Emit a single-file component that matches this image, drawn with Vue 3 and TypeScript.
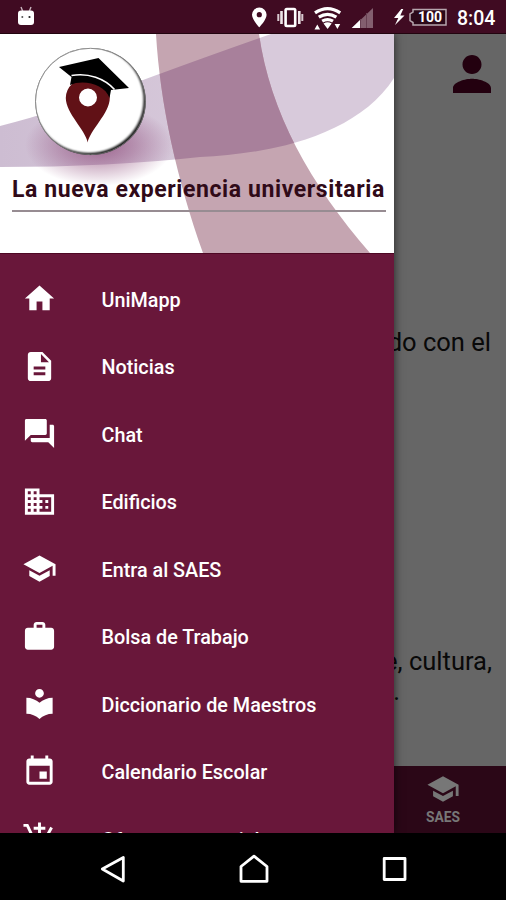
<script setup lang="ts">
interface MenuItem {
  label: string
  icon: string
}

const menu: MenuItem[] = [
  { label: 'UniMapp', icon: 'M10 20v-6h4v6h5v-8h3L12 3 2 12h3v8z' },
  { label: 'Noticias', icon: 'M14 2H6c-1.1 0-1.99.9-1.99 2L4 20c0 1.1.89 2 1.99 2H18c1.1 0 2-.9 2-2V8l-6-6zm2 16H8v-2h8v2zm0-4H8v-2h8v2zm-3-5V3.5L18.5 9H13z' },
  { label: 'Chat', icon: 'M21 6h-2v9H6v2c0 .55.45 1 1 1h11l4 4V7c0-.55-.45-1-1-1zm-4 6V3c0-.55-.45-1-1-1H3c-.55 0-1 .45-1 1v14l4-4h10c.55 0 1-.45 1-1z' },
  { label: 'Edificios', icon: 'M12 7V3H2v18h20V7H12zM6 19H4v-2h2v2zm0-4H4v-2h2v2zm0-4H4V9h2v2zm0-4H4V5h2v2zm4 12H8v-2h2v2zm0-4H8v-2h2v2zm0-4H8V9h2v2zm0-4H8V5h2v2zm10 12h-8v-2h2v-2h-2v-2h2v-2h-2V9h8v10zm-2-8h-2v2h2v-2zm0 4h-2v2h2v-2z' },
  { label: 'Entra al SAES', icon: 'M5 13.18v4L12 21l7-3.82v-4L12 17l-7-3.82zM12 3L1 9l11 6 9-4.91V17h2V9L12 3z' },
  { label: 'Bolsa de Trabajo', icon: 'M20 6h-4V4c0-1.11-.89-2-2-2h-4c-1.11 0-2 .89-2 2v2H4c-1.11 0-1.99.89-1.99 2L2 19c0 1.11.89 2 2 2h16c1.11 0 2-.89 2-2V8c0-1.11-.89-2-2-2zm-6 0h-4V4h4v2z' },
  { label: 'Diccionario de Maestros', icon: 'M12 11.55C9.64 9.35 6.48 8 3 8v11c3.48 0 6.64 1.35 9 3.55 2.36-2.19 5.52-3.55 9-3.55V8c-3.48 0-6.64 1.35-9 3.55zM12 8c1.66 0 3-1.34 3-3s-1.34-3-3-3-3 1.34-3 3 1.34 3 3 3z' },
  { label: 'Calendario Escolar', icon: 'M17 12h-5v5h5v-5zM16 1v2H8V1H6v2H5c-1.11 0-1.99.9-1.99 2L3 19c0 1.1.89 2 2 2h14c1.1 0 2-.9 2-2V5c0-1.1-.9-2-2-2h-1V1h-2zm3 18H5V8h14v11z' },
  { label: 'Ofertas comerciales', icon: 'M11 9h2V6h3V4h-3V1h-2v3H8v2h3v3zm-4 9c-1.1 0-1.99.9-1.99 2S5.9 22 7 22s2-.9 2-2-.9-2-2-2zm10 0c-1.1 0-1.99.9-1.99 2s.89 2 1.99 2 2-.9 2-2-.9-2-2-2zm-9.83-3.25l.03-.12.9-1.63h7.45c.75 0 1.41-.41 1.75-1.03l3.86-7.01L19.42 4h-.01l-1.1 2-2.76 5H8.53l-.13-.27L6.16 6l-.95-2-.94-2H1v2h2l3.6 7.59-1.35 2.45c-.16.28-.25.61-.25.96 0 1.1.9 2 2 2h12v-2H7.42c-.13 0-.25-.11-.25-.25z' },
]
</script>

<template>
  <div class="phone">
    <header class="status">
      <svg class="android" viewBox="0 0 18 20"><path d="M4 1l2 5M14 1l-2 5" stroke="#c9b5be" stroke-width="1.4" /><rect x="1" y="4.5" width="16" height="14.5" rx="3" fill="#fff" /><circle cx="5.3" cy="11" r="1" fill="#555" /><circle cx="12.5" cy="11" r="1.1" fill="#222" /></svg>
      <svg class="status-icons" viewBox="250 0 200 34">
        <path fill="#fff" fill-rule="evenodd" d="M259.3 7.5a7.3 7.3 0 0 1 7.3 7.3c0 5-7.3 12.5-7.3 12.5s-7.3-7.5-7.3-12.5a7.3 7.3 0 0 1 7.3-7.3zm0 4.6a2.6 2.6 0 1 0 0 5.2 2.6 2.6 0 0 0 0-5.2z" />
        <rect x="285.6" y="9" width="9.6" height="17" rx="1.2" fill="none" stroke="#fff" stroke-width="2.6" />
        <path d="M281.5 11v13M299.3 11v13" stroke="#eee4e8" stroke-width="2.6" /><path d="M278.3 14v7M302.3 14v7" stroke="#d8c9cf" stroke-width="2" />
        <g fill="none" stroke="#fff" stroke-width="3.3"><path d="M315 12.8q12.6-8.4 25.2 0M318.8 17.2q8.8-5.6 17.6 0M322.2 21.2q5.4-3.2 10.8 0" /></g>
        <path fill="#fff" d="M323.5 23.5q4.1-2.4 8.2 0L327.6 29zM314.5 29.5h5.6l-2.8-5zM334.6 24h5.6l-2.8 5z" />
        <path fill="#835f6f" d="M373 8v20h-21z" /><path fill="#fff" d="M360 20v8h-8.3z" /><path d="M360.5 19v9M366.5 13v15" stroke="#684153" />
        <path fill="#fff" d="M401.3 9l-7.3 9h4.3l-3.3 7 9.5-9.5h-4.2l3-6.5z" />
        <path d="M413 9.5h33v15.6h-33v-2.6l-3-1.8v-6.8l3-1.8z" fill="#2c0819" stroke="#b6a6ae" stroke-width="1.5" />
      </svg>
      <span class="percent">100</span>
      <span class="clock">8:04</span>
    </header>

    <main class="body">
      <section class="content">
        <svg class="person" viewBox="4 4 16 16"><path d="M12 12c2.21 0 4-1.79 4-4s-1.79-4-4-4-4 1.79-4 4 1.79 4 4 4zm0 2c-2.67 0-8 1.34-8 4v2h16v-2c0-2.66-5.33-4-8-4z" /></svg>
        <p class="copy first">do con el</p>
        <p class="copy second">e, cultura,</p>
        <p class="copy third">.</p>
        <footer class="tab">
          <svg viewBox="0 0 24 24"><path :d="menu[4].icon" /></svg>
          <span>SAES</span>
        </footer>
      </section>

      <aside class="drawer">
        <div class="hero">
          <svg class="art" viewBox="0 34 394 219">
            <defs>
              <linearGradient id="band"><stop offset="0" stop-color="#cdbdd2" /><stop offset=".6" stop-color="#d8cadb" /><stop offset="1" stop-color="#d8cadb" /></linearGradient>
              <radialGradient id="glow"><stop offset="0" stop-color="#8c4677" stop-opacity=".75" /><stop offset=".5" stop-color="#8c4677" stop-opacity=".4" /><stop offset="1" stop-color="#8c4677" stop-opacity="0" /></radialGradient>
              <radialGradient id="rim" gradientUnits="userSpaceOnUse" cx="90.5" cy="101.5" r="56"><stop offset=".92" stop-color="#000" /><stop offset="1" stop-color="#333" /></radialGradient>
              <clipPath id="sash"><path d="M156 34C160 103 177 180 203 253H370C310 184 270 112 259 34z" /></clipPath>
              <filter id="soft"><feGaussianBlur stdDeviation=".8" /></filter>
              <clipPath id="disc"><ellipse cx="90.5" cy="101.5" rx="55.3" ry="53.5" /></clipPath>
            </defs>
            <path fill="#fff" d="M0 34h394v219H0z" />
            <path fill="url(#band)" d="M0 126C85 104 175 67 271 34H394V78C357 136 270 154 200 157Q110 167 0 167z" />
            <path fill="#c5a5b1" d="M156 34C160 103 177 180 203 253H370C310 184 270 112 259 34z" />
            <path fill="#a8809b" clip-path="url(#sash)" d="M0 126C85 104 175 67 271 34H394V78C357 136 270 154 200 157Q110 167 0 167z" />
            <ellipse cx="99" cy="145" rx="74" ry="41" fill="url(#glow)" />
            <ellipse cx="90.5" cy="101.5" rx="55.3" ry="53.5" fill="url(#rim)" />
            <g clip-path="url(#disc)"><ellipse cx="88.8" cy="99.9" rx="54.8" ry="53.1" fill="#fff" filter="url(#soft)" /></g>
            <ellipse cx="90.5" cy="101.5" rx="55" ry="53.2" fill="none" stroke="#777" stroke-width=".8" />
            <path fill="#611116" fill-rule="evenodd" d="M87.7 142.5C86 131 65.8 113 65.8 98a22 20 0 0 1 44 0c0 15-20.4 33-22.1 44.5zM88 88.5a9 9 0 1 0 0 18 9 9 0 0 0 0-18z" />
            <path d="M59 67l39.5-9L129 88l-18 2-1.5 8C105 84 83 79 70 85l1.5-8z" />
            <path d="M71.5 75.5c17-3 33 3 43 14" fill="none" stroke="#fff" stroke-width="1.6" />
          </svg>
          <h1>La nueva experiencia universitaria</h1>
        </div>
        <nav>
          <a v-for="item in menu" :key="item.label" class="row">
            <svg viewBox="0 0 24 24"><path :d="item.icon" /></svg>
            <span>{{ item.label }}</span>
          </a>
        </nav>
      </aside>
    </main>

    <footer class="system">
      <svg viewBox="0 833 506 67" fill="none" stroke="#fff" stroke-width="2.8" stroke-linejoin="round">
        <path d="M123.3 857.5v23.5l-21-12z" /><path d="M241 881.3v-14.8l13-10.3 13 10.3v14.8z" /><rect x="384.2" y="858.5" width="20.8" height="21" />
      </svg>
    </footer>
  </div>
</template>

<style>
body { margin: 0; background: #000; }
</style>

<style scoped>
.phone { width: 506px; height: 900px; display: flex; flex-direction: column; overflow: hidden; font-family: Roboto, sans-serif; background: #000; }
.status { position: relative; height: 34px; flex: none; background: #400b22; box-shadow: inset 0 -1px #22040f; color: #fff; }
.android { position: absolute; left: 17px; top: 6px; width: 18px; height: 20px; }
.status-icons { position: absolute; left: 250px; top: 0; width: 200px; height: 34px; }
.percent { position: absolute; left: 418px; top: 8px; font: 700 14px/18px Roboto, sans-serif; }
.clock { position: absolute; left: 457px; top: 7px; font: 500 19.5px/23px Roboto, sans-serif; }
.body { position: relative; flex: none; height: 799px; overflow: hidden; }
.content { position: absolute; inset: 0; background: #666; }
.person { position: absolute; left: 453px; top: 21px; width: 38px; height: 38px; fill: #23000f; }
.copy { position: absolute; right: 15px; margin: 0; color: #090909; font-size: 25.5px; line-height: 32px; white-space: nowrap; }
.first { top: 292px; }
.second { top: 611px; right: 14px; }
.third { top: 641px; right: 106px; }
.tab { position: absolute; left: 380px; right: 0; bottom: 0; height: 67px; display: flex; flex-direction: column; align-items: center; background: #2b0717; color: #777; }
.tab svg { width: 34px; height: 34px; margin-top: 6px; fill: #777; }
.tab span { font-size: 13.8px; line-height: 16px; font-weight: 700; margin-top: 3px; }
.drawer { position: absolute; left: 0; top: 0; width: 394px; height: 799px; overflow: hidden; background: #69173a; box-shadow: 0 0 9px rgba(0, 0, 0, .65); }
.hero { position: relative; height: 219px; box-shadow: 0 1px #4e0824; }
.art { display: block; width: 394px; height: 219px; }
h1 { position: absolute; left: 12px; top: 140px; width: 374px; height: 38px; box-sizing: border-box; margin: 0; padding-top: 1px; border-bottom: 2px solid #978c92; color: #300a18; font-size: 23px; line-height: 30px; font-weight: 700; letter-spacing: .6px; white-space: nowrap; }
nav { padding-top: 12.5px; }
.row { display: flex; align-items: center; height: 67.5px; padding-left: 22.2px; color: #fff; }
.row svg { width: 35px; height: 35px; flex: none; margin-top: -1px; fill: #fff; }
.row span { margin-left: 44.3px; padding-top: 2px; font-size: 19.8px; font-weight: 500; white-space: nowrap; }
.row:last-child span { padding-top: 3px; }
.system { height: 67px; flex: none; background: #000; }
.system svg { display: block; width: 506px; height: 67px; }
</style>
